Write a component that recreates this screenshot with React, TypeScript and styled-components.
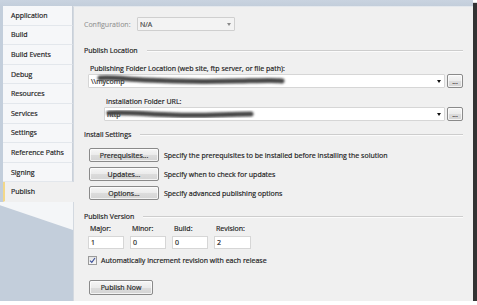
import React from "react";
import styled, { createGlobalStyle, css } from "styled-components";

const GlobalStyle = createGlobalStyle`
  html, body {
    margin: 0;
    padding: 0;
    background: #ffffff;
  }
  body {
    font-family: "Open Sans", "Noto Sans", "Liberation Sans", sans-serif;
    font-size: 7px;
    color: #161616;
    -webkit-text-stroke: 0.18px #2a2a2a;
  }
`;

const Frame = styled.div`
  width: 473px;
  height: 301px;
  box-sizing: border-box;
  padding-top: 6px;
  background: linear-gradient(#c9d3e0, #c3cedb 6px);
  box-shadow: 4px 3px 1px rgba(0, 0, 0, 0.8);
  display: flex;
  overflow: hidden;
`;

const Sidebar = styled.div`
  width: 73px;
  flex-shrink: 0;
  display: flex;
  flex-direction: column;
  background: #c3cedb;
`;

const TabList = styled.div`
  display: flex;
  flex-direction: column;
  padding-left: 3px;
  position: relative;
  z-index: 1;
`;

const Tab = styled.div<{ $active?: boolean }>`
  height: 19.6px;
  box-sizing: border-box;
  display: flex;
  align-items: center;
  padding-left: 8px;
  background: #f6f7f9;
  border-bottom: 1px solid #e3e7ec;
  border-right: 1px solid #c9d0d9;
  white-space: nowrap;
  ${(p) =>
    p.$active &&
    css`
      background: #f0f0f0;
      border-left: 2px solid #f3d889;
      padding-left: 6px;
      border-right: none;
      margin-right: -1px;
      border-bottom-color: #f0f0f0;
    `}
`;

const TabSweep = styled.div`
  height: 28px;
  margin-left: -3px;
  background: #f4f6f8;
  clip-path: polygon(0 0, 100% 0, 100% 100%, 0 8%);
`;

const Content = styled.div`
  flex: 1;
  background: #f0f0f0;
  border-top: 1px solid #e4e8ed;
  border-left: 1px solid #d3d9e0;
  padding: 10px 10px 0 10px;
  display: flex;
  flex-direction: column;
`;

const Row = styled.div<{ $gap?: number; $mt?: number }>`
  display: flex;
  align-items: center;
  gap: ${(p) => p.$gap ?? 0}px;
  margin-top: ${(p) => p.$mt ?? 0}px;
`;

const MutedLabel = styled.span`
  color: #939393;
  -webkit-text-stroke: 0.1px #999;
  width: 53px;
`;

const Combo = styled.div<{ $disabled?: boolean; $width?: number; $indent?: number }>`
  position: relative;
  height: 14px;
  box-sizing: border-box;
  ${(p) => (p.$width ? `width: ${p.$width}px;` : "flex: 1;")}
  margin-left: ${(p) => p.$indent ?? 0}px;
  background: ${(p) => (p.$disabled ? "#f3f3f3" : "#ffffff")};
  border: 1px solid ${(p) => (p.$disabled ? "#cfcfcf" : "#d6d6d6")};
  border-radius: 1px;
  display: flex;
  align-items: center;
  padding-left: 2px;
  color: ${(p) => (p.$disabled ? "#555" : "#2a2a2a")};
`;

const ComboArrow = styled.span<{ $disabled?: boolean }>`
  position: absolute;
  right: 3px;
  top: 5px;
  width: 0;
  height: 0;
  border-left: 2.5px solid transparent;
  border-right: 2.5px solid transparent;
  border-top: 3px solid ${(p) => (p.$disabled ? "#8a8a8a" : "#111")};
`;

const Scribble = styled.svg`
  position: absolute;
  left: 0;
  top: 0;
  pointer-events: none;
  overflow: visible;
`;

const SectionHeader = styled.div<{ $mt: number }>`
  display: flex;
  align-items: center;
  gap: 9px;
  margin-top: ${(p) => p.$mt}px;
  line-height: 12px;
  &::after {
    content: "";
    flex: 1;
    height: 0;
    border-top: 1px solid #cdcdcd;
    border-bottom: 1px solid #fbfbfb;
  }
`;

const FieldLabel = styled.div<{ $indent: number; $mt: number }>`
  margin-left: ${(p) => p.$indent}px;
  margin-top: ${(p) => p.$mt}px;
  line-height: 11px;
`;

const Button = styled.button<{ $width: number; $height?: number; $indent?: number }>`
  width: ${(p) => p.$width}px;
  height: ${(p) => p.$height ?? 14}px;
  margin-left: ${(p) => p.$indent ?? 0}px;
  box-sizing: border-box;
  padding: 0;
  font: inherit;
  color: #1e1e1e;
  border: 1px solid #8a8a8a;
  border-radius: 2px;
  background: linear-gradient(#f6f6f6 0%, #ebebeb 50%, #dcdcdc 52%, #d4d4d4 100%);
  box-shadow: inset 0 0 0 1px rgba(255, 255, 255, 0.7);
`;

const ButtonList = styled.div`
  display: flex;
  flex-direction: column;
  gap: 5px;
  margin-top: 7px;
  margin-left: 5px;
`;

const Desc = styled.span`
  white-space: nowrap;
`;

const VersionGrid = styled.div`
  display: grid;
  grid-template-columns: 36px 36px 36px 37px;
  column-gap: 6px;
  row-gap: 2px;
  margin-top: 0;
  margin-left: 4px;
`;

const VersionLabel = styled.div`
  padding-left: 2px;
  line-height: 11px;
`;

const VersionInput = styled.div`
  height: 13px;
  box-sizing: border-box;
  background: #ffffff;
  border: 1px solid #d6d6d6;
  padding-left: 2px;
  display: flex;
  align-items: center;
`;

const CheckRow = styled.label`
  display: flex;
  align-items: center;
  gap: 4px;
  margin-top: 7px;
  margin-left: 4px;
`;

const CheckBox = styled.span`
  width: 9px;
  height: 9px;
  box-sizing: border-box;
  border: 1px solid #9a9a9a;
  background: linear-gradient(#e4e4e4, #f7f7f7);
  display: flex;
  align-items: center;
  justify-content: center;
`;

const tabs = [
  "Application",
  "Build",
  "Build Events",
  "Debug",
  "Resources",
  "Services",
  "Settings",
  "Reference Paths",
  "Signing",
  "Publish",
];

const installButtons = [
  ["Prerequisites...", "Specify the prerequisites to be installed before installing the solution"],
  ["Updates...", "Specify when to check for updates"],
  ["Options...", "Specify advanced publishing options"],
];

const versions = [
  ["Major:", "1"],
  ["Minor:", "0"],
  ["Build:", "0"],
  ["Revision:", "2"],
];

const App = () => {
  return (
    <>
      <GlobalStyle />
      <Frame>
        <Sidebar>
          <TabList>
            {tabs.map((t) => (
              <Tab key={t} $active={t === "Publish"}>
                {t}
              </Tab>
            ))}
          </TabList>
          <TabSweep />
        </Sidebar>

        <Content>
          <Row $gap={0}>
            <MutedLabel>Configuration:</MutedLabel>
            <Combo $disabled $width={98}>
              N/A
              <ComboArrow $disabled />
            </Combo>
          </Row>

          <SectionHeader $mt={14}>Publish Location</SectionHeader>
          <FieldLabel $indent={6} $mt={6}>
            Publishing Folder Location (web site, ftp server, or file path):
          </FieldLabel>
          <Row $gap={2}>
            <Combo $indent={4}>
              \\mycomp
              <ComboArrow />
              <Scribble width="200" height="14">
                <defs>
                  <filter id="blur1" x="-10%" y="-100%" width="120%" height="300%">
                    <feGaussianBlur stdDeviation="0.9" />
                  </filter>
                </defs>
                <path
                  d="M11 3 C 25 2, 35 4, 55 5 S 110 7, 150 6 S 185 5, 193 6"
                  stroke="#474747"
                  strokeWidth="5"
                  strokeLinecap="round"
                  fill="none"
                  filter="url(#blur1)"
                />
              </Scribble>
            </Combo>
            <Button $width={16}>...</Button>
          </Row>

          <FieldLabel $indent={22} $mt={8}>
            Installation Folder URL:
          </FieldLabel>
          <Row $gap={2}>
            <Combo $indent={20}>
              http
              <ComboArrow />
              <Scribble width="160" height="14">
                <path
                  d="M4 5 C 20 4, 40 6, 70 7 S 120 6, 146 6"
                  stroke="#474747"
                  strokeWidth="5"
                  strokeLinecap="round"
                  fill="none"
                  filter="url(#blur1)"
                />
              </Scribble>
            </Combo>
            <Button $width={16}>...</Button>
          </Row>

          <SectionHeader $mt={8}>Install Settings</SectionHeader>
          <ButtonList>
            {installButtons.map(([label, desc]) => (
              <Row key={label} $gap={5}>
                <Button $width={70}>{label}</Button>
                <Desc>{desc}</Desc>
              </Row>
            ))}
          </ButtonList>

          <SectionHeader $mt={11}>Publish Version</SectionHeader>
          <VersionGrid>
            {versions.map(([l]) => (
              <VersionLabel key={l}>{l}</VersionLabel>
            ))}
            {versions.map(([l, v]) => (
              <VersionInput key={l + "v"}>{v}</VersionInput>
            ))}
          </VersionGrid>
          <CheckRow>
            <CheckBox>
              <svg width="7" height="7" viewBox="0 0 7 7">
                <path d="M1 3.6 L2.8 5.4 L6 1" stroke="#3a4f9a" strokeWidth="1.1" fill="none" />
              </svg>
            </CheckBox>
            Automatically increment revision with each release
          </CheckRow>
          <Row $mt={15}>
            <Button $width={64} $height={15} $indent={5}>
              Publish Now
            </Button>
          </Row>
        </Content>
      </Frame>
    </>
  );
};

export default App;
